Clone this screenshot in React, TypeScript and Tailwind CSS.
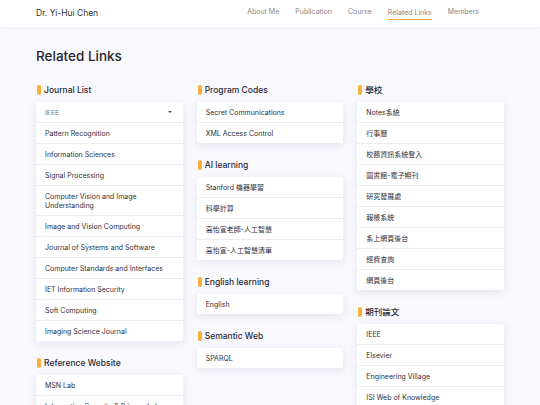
import React from 'react';

type Section = { title: string; items: string[]; select?: string };

const columns: Section[][] = [
  [
    {
      title: 'Journal List',
      select: 'IEEE',
      items: [
        'Pattern Recognition',
        'Information Sciences',
        'Signal Processing',
        'Computer Vision and Image Understanding',
        'Image and Vision Computing',
        'Journal of Systems and Software',
        'Computer Standards and Interfaces',
        'IET Information Security',
        'Soft Computing',
        'Imaging Science Journal',
      ],
    },
    {
      title: 'Reference Website',
      items: ['MSN Lab', 'Information Security & Privacy Lab', 'Cryptography Lab'],
    },
  ],
  [
    { title: 'Program Codes', items: ['Secret Communications', 'XML Access Control'] },
    {
      title: 'AI learning',
      items: ['Stanford 機器學習', '科學計算', '高怡宣老師-人工智慧', '高怡宣-人工智慧清單'],
    },
    { title: 'English learning', items: ['English'] },
    { title: 'Semantic Web', items: ['SPARQL'] },
  ],
  [
    {
      title: '學校',
      items: [
        'Notes系統',
        '行事曆',
        '校務資訊系統登入',
        '圖書館-電子期刊',
        '研究發展處',
        '報帳系統',
        '系上網頁後台',
        '經費查詢',
        '網頁後台',
      ],
    },
    {
      title: '期刊論文',
      items: ['IEEE', 'Elsevier', 'Engineering Village', 'ISI Web of Knowledge', 'Springer'],
    },
  ],
];

const nav = ['About Me', 'Publication', 'Course', 'Related Links', 'Members'];

function LinkCard({ section }: { section: Section }) {
  return (
    <div className="mb-[16px]">
      <h2 className="flex items-center gap-[3px] text-[8.5px] leading-[12px] font-medium text-[#2a2a33] mb-[6px] pl-[1px]">
        <span className="w-[4px] h-[10px] rounded-[2px] bg-[#f7b03c]" />
        {section.title}
      </h2>
      <div className="bg-white rounded-[2px] shadow-[0_2px_8px_rgba(40,40,90,0.10)]">
        {section.select && (
          <div className="flex items-center justify-between px-[9px] py-[5.5px] leading-[9px] text-[6.8px] text-[#777] border-b border-[#ececf0]">
            <span>{section.select}</span>
            <span className="w-0 h-0 mr-[2px] border-x-[2px] border-t-[2px] border-x-transparent border-t-[#555]" />
          </div>
        )}
        {section.items.map((it, i) => (
          <div
            key={it}
            className={
              'px-[9px] py-[5.5px] leading-[9px] text-[7px] text-[#2f2f38] ' +
              (i < section.items.length - 1 ? 'border-b border-[#ececf0]' : '')
            }
          >
            {it}
          </div>
        ))}
      </div>
    </div>
  );
}

export default function App() {
  return (
    <div
      className="min-h-screen bg-[#f8f8fd] overflow-hidden"
      style={{ fontFamily: 'Inter, "Noto Sans CJK TC", sans-serif' }}
    >
      <header className="h-[27px] bg-white shadow-[0_1px_4px_rgba(40,40,90,0.06)] flex items-center justify-between px-[36px]">
        <span className="text-[8.5px] text-[#333]">Dr. Yi-Hui Chen</span>
        <nav className="flex gap-[16px] mr-[25px]">
          {nav.map((n) => (
            <span
              key={n}
              className={
                'text-[7px] leading-[10px] text-[#888] ' +
                (n === 'Related Links' ? 'border-b border-[#f0a840] pb-[1px] mt-[1px]' : '')
              }
            >
              {n}
            </span>
          ))}
        </nav>
      </header>
      <main className="px-[36px]">
        <h1 className="mt-[19px] mb-[18px] text-[13.5px] leading-[20px] font-medium text-[#26262e]">
          Related Links
        </h1>
        <div className="grid grid-cols-3 gap-[14px]">
          {columns.map((col, ci) => (
            <div key={ci}>
              {col.map((s) => (
                <LinkCard key={s.title} section={s} />
              ))}
            </div>
          ))}
        </div>
      </main>
    </div>
  );
}
